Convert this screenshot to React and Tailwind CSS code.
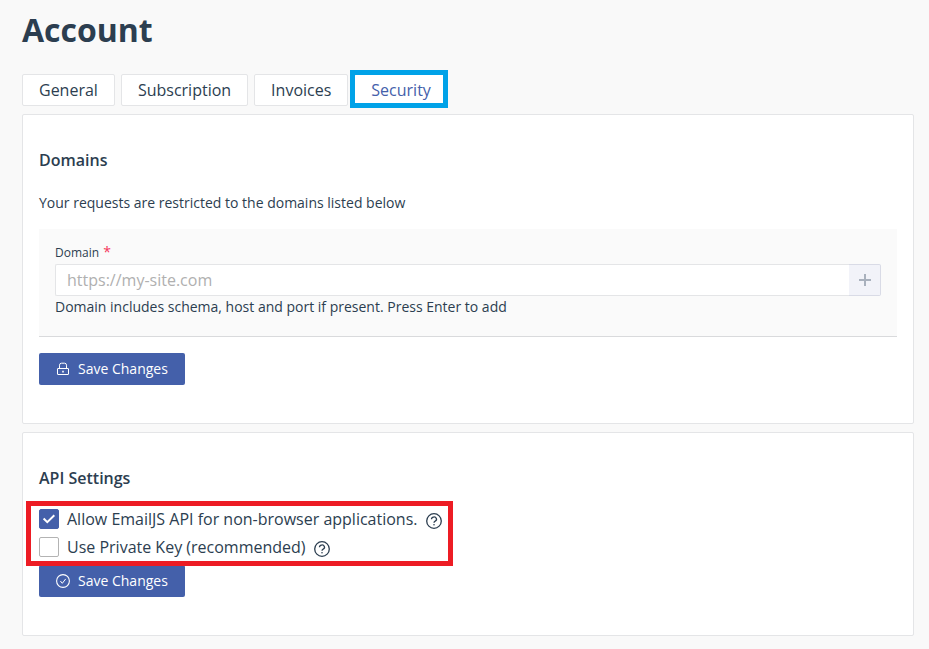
import React, { useState } from "react";

const TABS = ["General", "Subscription", "Invoices", "Security"];

function LockIcon() {
  return (
    <svg viewBox="0 0 14 14" className="h-3.5 w-3.5" fill="none" stroke="currentColor" aria-hidden="true">
      <rect x="1.5" y="6.5" width="11" height="6" rx="0.3" />
      <path d="M3.5 6.5V3.2a2 2 0 0 1 2-2h3a2 2 0 0 1 2 2v3.3" />
      <path d="M7 8.8v1.6" strokeWidth="1.6" />
    </svg>
  );
}

function CheckCircleIcon() {
  return (
    <svg viewBox="0 0 14 14" className="h-3.5 w-3.5" fill="none" stroke="currentColor" aria-hidden="true">
      <circle cx="7" cy="7" r="6.4" strokeWidth="1.1" />
      <path d="M4.4 7l1.9 2.3 3.4-4.4" />
    </svg>
  );
}

function HelpIcon() {
  return (
    <svg viewBox="0 0 16 16" className="h-4 w-4 text-[#2c3e50]" fill="none" stroke="currentColor" aria-hidden="true">
      <circle cx="8" cy="8" r="7.3" strokeWidth="1.3" />
      <path d="M5.5 6.3a2.5 2.2 0 1 1 3.7 1.8c-.8.4-1.2.8-1.2 1.6" strokeWidth="1.3" />
      <circle cx="8" cy="11.7" r="0.8" fill="currentColor" stroke="none" />
    </svg>
  );
}

function Card({ title, children }) {
  return (
    <section className="rounded-xs border border-[#e4e5e7] bg-white px-4 pt-8 pb-[38px]">
      <h2 className="text-base leading-[26px] font-semibold">{title}</h2>
      {children}
    </section>
  );
}

function SaveButton({ icon }) {
  return (
    <button
      type="button"
      className="flex h-8 items-center gap-2 rounded-xs bg-[#4460aa] px-[17px] text-sm font-medium text-white"
    >
      {icon}
      Save Changes
    </button>
  );
}

function CheckRow({ id, label, checked, onChange }) {
  return (
    <div className="flex h-5 items-center">
      <span className="relative h-5 w-5">
        <input
          id={id}
          type="checkbox"
          checked={checked}
          onChange={(e) => onChange(e.target.checked)}
          className="peer block h-5 w-5 appearance-none rounded-xs border border-[#b3b3b3] bg-white checked:border-[#4460aa] checked:bg-[#4460aa]"
        />
        <svg
          viewBox="0 0 20 20"
          className="pointer-events-none absolute inset-0 hidden h-5 w-5 text-white peer-checked:block"
          fill="none"
          stroke="currentColor"
          strokeWidth="2"
          aria-hidden="true"
        >
          <path d="M4.6 9.5l3.7 3.7 7-6.9" />
        </svg>
      </span>
      <label htmlFor={id} className="ml-2 text-base leading-5">
        {label}
      </label>
      <span className="mt-1 ml-2">
        <HelpIcon />
      </span>
    </div>
  );
}

export default function App() {
  const [tab, setTab] = useState("Security");
  const [domain, setDomain] = useState("");
  const [allowApi, setAllowApi] = useState(true);
  const [privateKey, setPrivateKey] = useState(false);

  return (
    <main className="min-h-screen bg-[#f9f9f9] pt-2 pr-[15px] pb-3 pl-[22px] font-['Open_Sans',sans-serif] text-[#2c3e50]">
      <h1 className="text-[32px] leading-[44px] font-bold">Account</h1>

      <nav className="mt-[22px] flex gap-1.5">
        {TABS.map((name) => (
          <div key={name} className="relative">
            <button
              type="button"
              onClick={() => setTab(name)}
              className={
                "block h-8 rounded-xs border border-[#e4e5e7] bg-white px-4 text-base leading-[30px] " +
                (tab === name ? "text-[#4460aa]" : "")
              }
            >
              {name}
            </button>
            {tab === name && (
              <span className="pointer-events-none absolute -top-1 right-0 -bottom-0.5 -left-1 border-5 border-[#00a2e8]" />
            )}
          </div>
        ))}
      </nav>

      <div className="mt-2 flex flex-col gap-2">
        <Card title="Domains">
          <p className="mt-5 text-sm leading-5">Your requests are restricted to the domains listed below</p>

          <div className="mt-4 mb-4 border-b border-[#d9dadc] bg-[#fafafa] px-4 pt-[15px] pb-[18px]">
            <label htmlFor="domain" className="block pb-[3px] text-xs leading-4">
              Domain <span className="ml-px text-sm leading-4 text-[#f5365c]">*</span>
            </label>
            <div className="flex h-8">
              <input
                id="domain"
                type="text"
                value={domain}
                onChange={(e) => setDomain(e.target.value)}
                placeholder="https://my-site.com"
                className="min-w-0 flex-1 rounded-l-xs border border-r-0 border-[#e4e5e7] bg-white px-[11px] text-base placeholder:text-[#b0b0b0]"
              />
              <button
                type="button"
                aria-label="Add domain"
                className="flex w-8 items-center justify-center rounded-r-xs border border-l-0 border-[#d9dbe6] bg-[#f2f3f9] text-[#a9b1bd]"
              >
                <svg viewBox="0 0 12 12" className="h-3 w-3" stroke="currentColor" strokeWidth="2" aria-hidden="true">
                  <path d="M6 0v12M0 6h12" />
                </svg>
              </button>
            </div>
            <p className="text-sm leading-[22px]">
              Domain includes schema, host and port if present. Press Enter to add
            </p>
          </div>

          <SaveButton icon={<LockIcon />} />
        </Card>

        <Card title="API Settings">
          <div className="relative mt-[18px] mb-2 flex w-fit flex-col gap-2">
            <CheckRow
              id="allow-api"
              label="Allow EmailJS API for non-browser applications."
              checked={allowApi}
              onChange={setAllowApi}
            />
            <CheckRow
              id="private-key"
              label="Use Private Key (recommended)"
              checked={privateKey}
              onChange={setPrivateKey}
            />
            <span className="pointer-events-none absolute -top-2 -right-[11px] -bottom-[9px] -left-[13px] border-5 border-[#ed1c24]" />
          </div>

          <SaveButton icon={<CheckCircleIcon />} />
        </Card>
      </div>
    </main>
  );
}
